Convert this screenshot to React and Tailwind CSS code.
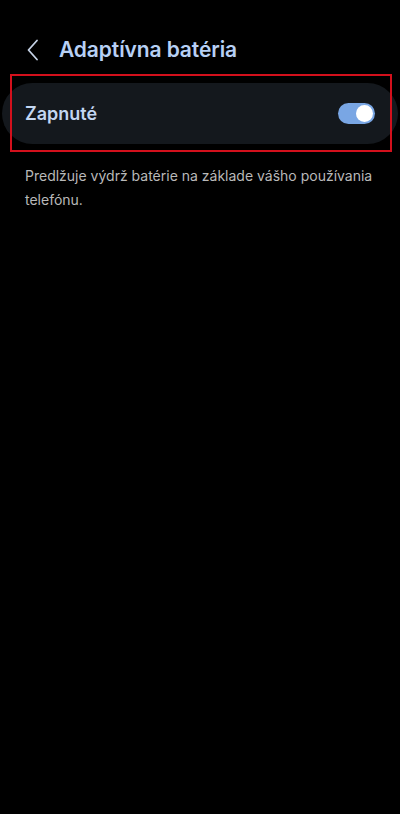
export default function App() {
  return (
    <div
      className="w-[400px] h-[814px] bg-black overflow-hidden"
      style={{ fontFamily: "Inter, 'Noto Sans', sans-serif" }}
    >
      {/* Header */}
      <div className="flex items-center h-[60px] pt-[40px] pl-[26px]">
        <svg width="14" height="22" viewBox="0 0 14 22" fill="none">
          <path d="M11 1.5 L2.5 11 L11 20.5" stroke="#c5d2e6" strokeWidth="1.8" strokeLinecap="round" strokeLinejoin="round" />
        </svg>
        <h1 className="ml-[19px] text-[21px] font-semibold text-[#b7d0f5] tracking-[-0.1px]">
          Adaptívna batéria
        </h1>
      </div>

      {/* Toggle card */}
      <div className="relative mt-[23px] mx-[2px]">
        <div className="flex items-center justify-between h-[61px] rounded-[31px] bg-[#14181d] pl-[23px] pr-[23px]">
          <span className="text-[18px] font-semibold text-[#c3d6f2]">Zapnuté</span>
          <div className="flex items-center justify-end w-[37px] h-[21px] rounded-full bg-[#79a6e4] pr-[2px]">
            <div className="w-[17px] h-[17px] rounded-full bg-white" />
          </div>
        </div>
        <div className="absolute left-[8px] right-[6px] top-[-9px] bottom-[-8px] border-2 border-[#d3101c] pointer-events-none" />
      </div>

      {/* Description */}
      <p className="mt-[20px] px-[25px] text-[14px] leading-[24px] text-[#b9b9b9]">
        Predlžuje výdrž batérie na základe vášho používania telefónu.
      </p>
    </div>
  );
}
